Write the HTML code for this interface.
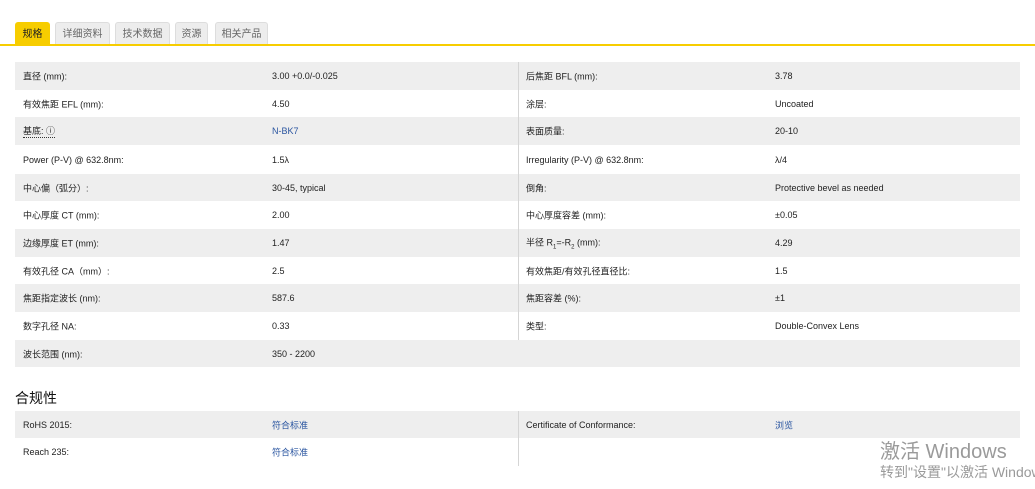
<!DOCTYPE html>
<html><head><meta charset="utf-8"><style>
body{margin:0;width:1035px;height:489px;background:#fff;font-family:"Liberation Sans","Noto Sans CJK SC",sans-serif;color:#222;overflow:hidden;position:relative}
.tab{position:absolute;top:22px;height:23px;background:#ededed;border:1px solid #ddd;border-bottom:none;border-radius:3px 3px 0 0;font-size:10px;color:#666;line-height:23px;text-align:center;box-sizing:border-box}
.tab.on{background:#f7cd00;color:#222;border-color:#f7cd00}
.line{position:absolute;top:44px;left:0;width:1035px;height:2px;background:#f7cd00}
.row{position:absolute;left:15px;width:1005px;font-size:9px}
.row.g{background:#eeeeee}
.row span{position:absolute;top:50%;transform:translateY(-50%);white-space:nowrap}
.sep{position:absolute;left:503px;top:0;bottom:0;width:1px;background:#d5d5d5}
.a{color:#2a55a0}
h3{position:absolute;left:15px;top:388px;margin:0;font-size:14px;font-weight:normal;color:#111}
.wm{position:absolute;color:#9a9a9a;white-space:nowrap}
</style></head><body>
<div class="tab on" style="left:15px;width:35px">规格</div>
<div class="tab" style="left:55px;width:55px">详细资料</div>
<div class="tab" style="left:115px;width:55px">技术数据</div>
<div class="tab" style="left:175px;width:33px">资源</div>
<div class="tab" style="left:215px;width:53px">相关产品</div>
<div class="line"></div>

<div class="row g" style="top:62px;height:28px"><div class="sep"></div><span style="left:8px">直径 (mm):</span><span style="left:257px">3.00 +0.0/-0.025</span><span style="left:511px">后焦距 BFL (mm):</span><span style="left:760px">3.78</span></div>
<div class="row" style="top:90px;height:27px"><div class="sep"></div><span style="left:8px">有效焦距 EFL (mm):</span><span style="left:257px">4.50</span><span style="left:511px">涂层:</span><span style="left:760px">Uncoated</span></div>
<div class="row g" style="top:117px;height:28px"><div class="sep"></div><span style="left:8px;border-bottom:1px dotted #333">基底: ⓘ</span><span style="left:257px" class="a">N-BK7</span><span style="left:511px">表面质量:</span><span style="left:760px">20-10</span></div>
<div class="row" style="top:145px;height:29px"><div class="sep"></div><span style="left:8px">Power (P-V) @ 632.8nm:</span><span style="left:257px">1.5λ</span><span style="left:511px">Irregularity (P-V) @ 632.8nm:</span><span style="left:760px">λ/4</span></div>
<div class="row g" style="top:174px;height:27px"><div class="sep"></div><span style="left:8px">中心偏（弧分）:</span><span style="left:257px">30-45, typical</span><span style="left:511px">倒角:</span><span style="left:760px">Protective bevel as needed</span></div>
<div class="row" style="top:201px;height:28px"><div class="sep"></div><span style="left:8px">中心厚度 CT (mm):</span><span style="left:257px">2.00</span><span style="left:511px">中心厚度容差 (mm):</span><span style="left:760px">±0.05</span></div>
<div class="row g" style="top:229px;height:28px"><div class="sep"></div><span style="left:8px">边缘厚度 ET (mm):</span><span style="left:257px">1.47</span><span style="left:511px">半径 R<sub style="font-size:6px">1</sub>=-R<sub style="font-size:6px">2</sub> (mm):</span><span style="left:760px">4.29</span></div>
<div class="row" style="top:257px;height:27px"><div class="sep"></div><span style="left:8px">有效孔径 CA（mm）:</span><span style="left:257px">2.5</span><span style="left:511px">有效焦距/有效孔径直径比:</span><span style="left:760px">1.5</span></div>
<div class="row g" style="top:284px;height:28px"><div class="sep"></div><span style="left:8px">焦距指定波长 (nm):</span><span style="left:257px">587.6</span><span style="left:511px">焦距容差 (%):</span><span style="left:760px">±1</span></div>
<div class="row" style="top:312px;height:28px"><div class="sep"></div><span style="left:8px">数字孔径 NA:</span><span style="left:257px">0.33</span><span style="left:511px">类型:</span><span style="left:760px">Double-Convex Lens</span></div>
<div class="row g" style="top:340px;height:27px"><span style="left:8px">波长范围 (nm):</span><span style="left:257px">350 - 2200</span></div>

<h3>合规性</h3>
<div class="row g" style="top:411px;height:27px"><div class="sep"></div><span style="left:8px">RoHS 2015:</span><span style="left:257px" class="a">符合标准</span><span style="left:511px">Certificate of Conformance:</span><span style="left:760px" class="a">浏览</span></div>
<div class="row" style="top:438px;height:28px"><div class="sep"></div><span style="left:8px">Reach 235:</span><span style="left:257px" class="a">符合标准</span></div>

<div class="wm" style="left:880px;top:435px;font-size:20px">激活 Windows</div>
<div class="wm" style="left:880px;top:462px;font-size:14px">转到"设置"以激活 Windows</div>
</body></html>
